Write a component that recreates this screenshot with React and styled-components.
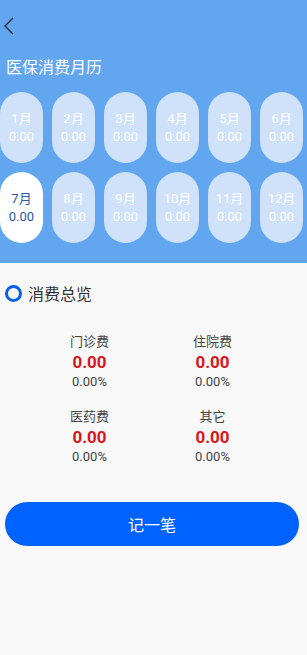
import styled, { createGlobalStyle } from 'styled-components';

const GlobalStyle = createGlobalStyle`
  body {
    margin: 0;
    background: #f8f8f8;
    font-family: Roboto, "Noto Sans CJK SC", sans-serif;
  }
`;

const Page = styled.div`
  width: 307px;
  min-height: 655px;
  background: #f8f8f8;
`;

const Header = styled.header`
  background: #62a6ef;
  padding: 16px 0 20px;
`;

const Back = styled.div`
  padding-left: 3px;
  height: 20px;
  display: flex;
  align-items: center;
`;

const Title = styled.h1`
  margin: 20px 0 0 6px;
  font-size: 16px;
  font-weight: 400;
  line-height: 24px;
  color: #fff;
`;

const MonthGrid = styled.div`
  display: grid;
  grid-template-columns: repeat(6, 43px);
  column-gap: 9px;
  row-gap: 9px;
  margin-top: 12px;
`;

const Pill = styled.div`
  height: 71px;
  border-radius: 22px;
  background: ${p => (p.$active ? '#ffffff' : '#cfe2fa')};
  color: ${p => (p.$active ? '#2a5aa8' : '#ffffff')};
  display: flex;
  flex-direction: column;
  align-items: center;
  justify-content: center;
  font-size: 13px;
  line-height: 18px;
`;

const Section = styled.section`
  padding: 18px 5px 0;
`;

const SectionHead = styled.div`
  display: flex;
  align-items: center;
  gap: 6px;
  font-size: 16px;
  color: #333;
`;

const Ring = styled.span`
  width: 11px;
  height: 11px;
  border: 3.5px solid #0a5fe6;
  border-radius: 50%;
`;

const Stats = styled.div`
  display: grid;
  grid-template-columns: 123px 123px;
  justify-content: center;
  row-gap: 17px;
  margin-top: 28px;
  padding-right: 5px;
`;

const Stat = styled.div`
  display: flex;
  flex-direction: column;
  align-items: center;
`;

const StatLabel = styled.div`
  font-size: 13px;
  line-height: 18px;
  color: #444;
`;

const StatValue = styled.div`
  font-size: 17px;
  font-weight: 700;
  line-height: 22px;
  color: #d9161c;
`;

const StatPct = styled.div`
  font-size: 13px;
  line-height: 18px;
  color: #444;
`;

const Button = styled.button`
  display: block;
  width: 294px;
  height: 44px;
  margin: 36px 0 0;
  border: none;
  border-radius: 22px;
  background: #0062ff;
  color: #fff;
  font-family: inherit;
  font-size: 16px;
`;

const months = Array.from({ length: 12 }, (_, i) => i + 1);

const stats = [
  { label: '门诊费', value: '0.00', pct: '0.00%' },
  { label: '住院费', value: '0.00', pct: '0.00%' },
  { label: '医药费', value: '0.00', pct: '0.00%' },
  { label: '其它', value: '0.00', pct: '0.00%' },
];

export default function App() {
  return (
    <Page>
      <GlobalStyle />
      <Header>
        <Back>
          <svg width="12" height="20" viewBox="0 0 12 20">
            <path d="M10 2 L2 10 L10 18" fill="none" stroke="#1d2b3a" strokeWidth="1.4" />
          </svg>
        </Back>
        <Title>医保消费月历</Title>
        <MonthGrid>
          {months.map(m => (
            <Pill key={m} $active={m === 7}>
              <span>{m}月</span>
              <span>0.00</span>
            </Pill>
          ))}
        </MonthGrid>
      </Header>
      <Section>
        <SectionHead>
          <Ring />
          消费总览
        </SectionHead>
        <Stats>
          {stats.map(s => (
            <Stat key={s.label}>
              <StatLabel>{s.label}</StatLabel>
              <StatValue>{s.value}</StatValue>
              <StatPct>{s.pct}</StatPct>
            </Stat>
          ))}
        </Stats>
        <Button>记一笔</Button>
      </Section>
    </Page>
  );
}
